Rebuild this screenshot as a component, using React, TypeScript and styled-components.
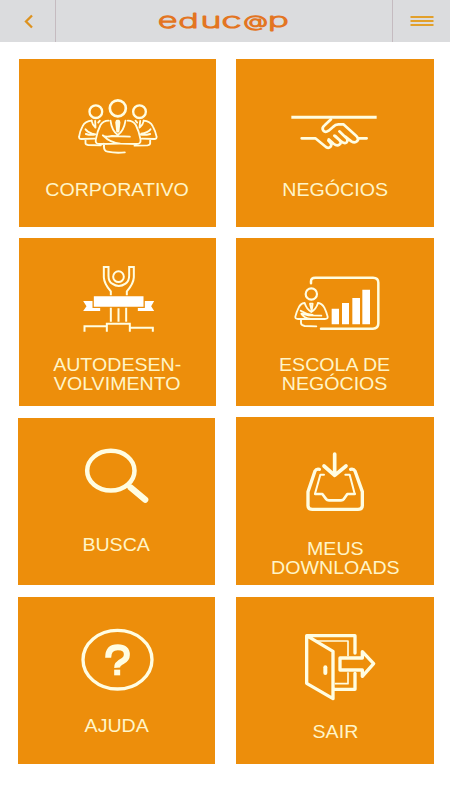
import React from "react";
import styled, { createGlobalStyle } from "styled-components";

const GlobalStyle = createGlobalStyle`
  * { box-sizing: border-box; }
  body { margin: 0; background: #fff; font-family: "Liberation Sans", Arial, sans-serif; }
`;

const Screen = styled.div`
  width: 450px;
  height: 800px;
  overflow: hidden;
  background: #fff;
`;

const Header = styled.header`
  display: grid;
  grid-template-columns: 56px 1fr 58px;
  height: 42px;
  background: #dbdcde;
`;

const HeaderButton = styled.button<{ $side: "left" | "right" }>`
  display: flex;
  align-items: center;
  justify-content: center;
  padding: 0;
  border: 0;
  border-${(p) => (p.$side === "left" ? "right" : "left")}: 1px solid #c5bbc0;
  background: transparent;
`;

const Brand = styled.svg`
  display: block;
  width: 336px;
  height: 42px;
  font-family: Inter, "DejaVu Sans", sans-serif;
  font-weight: 200;
  fill: #e37522;
  stroke: #e37522;
  stroke-width: 1.7;
  stroke-linejoin: round;

  text {
    vector-effect: non-scaling-stroke;
  }
`;

const Grid = styled.main`
  display: flex;
  gap: 20px;
  padding: 17px 16px 0 18px;
`;

const Column = styled.div`
  display: flex;
  flex-direction: column;
  width: 198px;
`;

const Tile = styled.button<{ $gap: number; $top: number; $shift?: number; $height?: number }>`
  display: flex;
  flex-direction: column;
  align-items: center;
  flex: none;
  width: ${(p) => (p.$shift === undefined ? 198 : 197)}px;
  height: ${(p) => p.$height ?? 168}px;
  margin: ${(p) => p.$gap}px 0 0 ${(p) => p.$shift ?? 0}px;
  padding: ${(p) => p.$top}px 0 0;
  border: 0;
  background: #ed8e0b;
  font-family: inherit;
`;

const Glyph = styled.svg`
  flex: none;
  display: block;
  fill: none;
  stroke: #fffde2;
  stroke-width: 7;
  stroke-linecap: round;
  stroke-linejoin: round;
`;

const Label = styled.span<{ $gap: number }>`
  margin-top: ${(p) => p.$gap}px;
  color: #fff5c8;
  font-size: 17.5px;
  line-height: 19.6px;
  white-space: pre;
  text-align: center;
  transform: scaleX(1.12);
`;

const TeamIcon = () => (
  <Glyph width="120" height="80" viewBox="-7.5 0 360 240">
    <circle cx="172" cy="70" r="24" strokeWidth="8" />
    <circle cx="106" cy="80" r="19" />
    <circle cx="237" cy="80" r="19" />
    <g strokeWidth="5.5">
      <path d="M144 107q-16 0-24 13-9 17-14 43-3 15 13 14l60-1M202 107q16 0 24 13 9 17 14 43 2 15-13 14l-47-1q-30-2-53-25 7 6 27 2l54 2M150 107q4 31 22 43 18-12 23-43M131 178q-3 20 10 22 25 5 52 2M130 184v-8" />
      <path fill="#fffde2" d="M169 107h6l2 5-3 28h-4l-3-28z" />
      <path d="M94 107q-20 1-28 17-8 15-10 30-2 8 7 8l40-1M75 133q5 8 20 13l10 2M76 147q13 4 27 2M75 163v12q0 4 8 5l38 1M93 107q3 13 11 20M118 107l-5 6M104 108l1 20" />
      <path d="M249 107q20 1 28 17 8 15 11 30 2 8-7 8l-37-1M270 133q-8 10-28 13M269 147q-15 4-29 2M269 163v12q0 5-8 6l-39 1M250 107q-3 13-11 19M225 107l5 6M239 108l-2 20" />
    </g>
  </Glyph>
);

const HandshakeIcon = () => (
  <Glyph width="120" height="60" viewBox="0 0 360 180">
    <path strokeWidth="9" strokeLinecap="butt" d="M49 52h256" />
    <path
      strokeWidth="8"
      d="M80 115h41l32 26q8 5 14-1 5-7-3-14l-4-4M178 107l15 13q8 9 0 14-7 5-17-3l-15-13M193 94l20 19q8 9 1 15-7 4-17-5l-16-15M205 73h-15q-9 0-16 8l-13 11q-10 7-16 0-6-8 4-16l19-18M205 73l40 36q8 8 1 15-7 6-17 0l-19-15M251 115h24"
    />
  </Glyph>
);

const TrophyIcon = () => (
  <Glyph width="120" height="85" viewBox="-7.5 0 360 255">
    <g strokeWidth="6" strokeLinecap="butt" strokeLinejoin="miter">
      <circle cx="174" cy="65" r="16" />
      <path d="M151 121v-12q-20-23-21-42V36h14v26q0 18 11 24 20 14 40 0 11-8 11-24V36h14v31q-1 19-21 42v12M151 158v42M174 160v40M197 158v42" />
      <path d="M72 230v-16h67v-8h69v12h69v12M139 206v24M208 206v24" />
    </g>
    <g fill="#fff" stroke="none">
      <path d="M100 124h149v31H100zM68 138h28v21h23v9H68l10-14zM281 138h-28v21h-21v9h49l-9-14z" />
    </g>
  </Glyph>
);

const BoardIcon = () => (
  <Glyph width="120" height="75" viewBox="-15 0 360 225">
    <path strokeWidth="7.5" d="M93 55v-6q0-11 13-11h173q16 0 16 15v122q0 16-16 16H123" />
    <circle cx="94" cy="87" r="17" strokeWidth="6.5" />
    <path
      strokeWidth="5.5"
      d="M73 114q-11 1-17 14-7 14-10 27-1 7 8 7h36M114 114q12 1 19 14 6 12 10 27 1 7-8 7H92q-20-3-28-16l22 5 38 1M74 114q6 19 20 27 14-8 20-27M90 116h8l-3 20-5-20M62 137q15 10 36 13M63 163v11q0 7 11 9l35 1"
    />
    <path fill="#fff" stroke="none" d="M155 131h22v47h-22zM186 114h21v64h-21zM217 99h23v79h-23zM247 74h23v104h-23z" />
  </Glyph>
);

const SearchIcon = () => (
  <Glyph width="100" height="80" viewBox="-10.5 0 300 240">
    <ellipse cx="121" cy="107" rx="71" ry="59.5" strokeWidth="13.5" />
    <path strokeWidth="12" d="M170 150l51 44" />
    <path strokeWidth="19" d="M181 158l43 36" />
  </Glyph>
);

const DownloadsIcon = () => (
  <Glyph width="100" height="80" viewBox="-15 0 300 240">
    <path strokeWidth="11" d="M134 42v64M102 78l32 28 34-28" />
    <path strokeWidth="10" d="M88 88q-9-2-13 5L54 155v42q0 11 13 11h137q13 0 13-11v-42L195 93q-4-7-13-5" />
    <path strokeWidth="8" d="M76 162h21l12 16q2 3 8 3h36q6 0 8-3l11-16h22" />
    <path strokeWidth="6" d="M102 104H91l-16 57M166 104h13l15 57" />
  </Glyph>
);

const HelpIcon = () => (
  <Glyph width="100" height="85" viewBox="-10.5 0 300 255">
    <ellipse cx="141" cy="134" rx="103.5" ry="88" strokeWidth="10" />
    <path strokeWidth="18" strokeLinecap="butt" d="M113 128q0-31 29-31 28 0 27 23 0 11-12 18-18 9-17 20" />
    <path fill="#fffde2" stroke="none" d="M131 164h18v17h-18z" />
  </Glyph>
);

const ExitIcon = () => (
  <Glyph width="100" height="85" viewBox="-15 0 300 255">
    <g strokeWidth="10">
      <path d="M50 47l79 47v142L50 190zM50 47h145v52M195 160v48h-61" />
      <path d="M150 114h67V95l34 36-34 38v-19h-67z" />
      <path strokeWidth="12" d="M106 142v17" />
      <path strokeWidth="5" strokeLinecap="butt" d="M78 63h96v46M174 157v34h-40" />
    </g>
  </Glyph>
);

export default function App() {
  return (
    <>
      <GlobalStyle />
      <Screen>
        <Header>
          <HeaderButton $side="left" aria-label="Voltar">
            <svg width="12" height="16" viewBox="0 0 12 16" fill="none" stroke="#dd921f" strokeWidth="2.3">
              <path d="M10 2.5L4 8.5l6 6" />
            </svg>
          </HeaderButton>
          <Brand viewBox="56 0 336 42" role="img" aria-label="educ@p">
            <text transform="translate(158 27.5) scale(1.6 1)" fontSize="21">e</text>
            <text transform="translate(178.5 27.5) scale(1.7 1)" fontSize="20">d</text>
            <text transform="translate(200.5 27.5) scale(1.7 1)" fontSize="21">u</text>
            <text transform="translate(221.5 27.5) scale(1.75 1)" fontSize="21">c</text>
            <text transform="translate(243.5 26.6) scale(1.55 1)" fontSize="16">@</text>
            <text transform="translate(268 27) scale(1.75 1)" fontSize="20">p</text>
          </Brand>
          <HeaderButton $side="right" aria-label="Menu">
            <svg width="24" height="12" viewBox="0 0 24 12" fill="none" stroke="#e2a02b" strokeWidth="2">
              <path d="M.5 2h23M.5 6h23M.5 10h23" />
            </svg>
          </HeaderButton>
        </Header>
        <Grid>
          <Column>
            <Tile $gap={0} $top={26} $shift={1}>
              <TeamIcon />
              <Label $gap={16}>CORPORATIVO</Label>
            </Tile>
            <Tile $gap={11} $top={17} $shift={1}>
              <TrophyIcon />
              <Label $gap={15.5}>{"AUTODESEN-\nVOLVIMENTO"}</Label>
            </Tile>
            <Tile $gap={12} $top={17} $shift={0} $height={167}>
              <SearchIcon />
              <Label $gap={21}>BUSCA</Label>
            </Tile>
            <Tile $gap={12} $top={18} $shift={0} $height={167}>
              <HelpIcon />
              <Label $gap={16.5}>AJUDA</Label>
            </Tile>
          </Column>
          <Column>
            <Tile $gap={0} $top={41}>
              <HandshakeIcon />
              <Label $gap={21}>NEGÓCIOS</Label>
            </Tile>
            <Tile $gap={11} $top={27}>
              <BoardIcon />
              <Label $gap={15.5}>{"ESCOLA DE\nNEGÓCIOS"}</Label>
            </Tile>
            <Tile $gap={11} $top={23}>
              <DownloadsIcon />
              <Label $gap={19.5}>{"MEUS\nDOWNLOADS"}</Label>
            </Tile>
            <Tile $gap={12} $top={23} $height={167}>
              <ExitIcon />
              <Label $gap={17.5}>SAIR</Label>
            </Tile>
          </Column>
        </Grid>
      </Screen>
    </>
  );
}
